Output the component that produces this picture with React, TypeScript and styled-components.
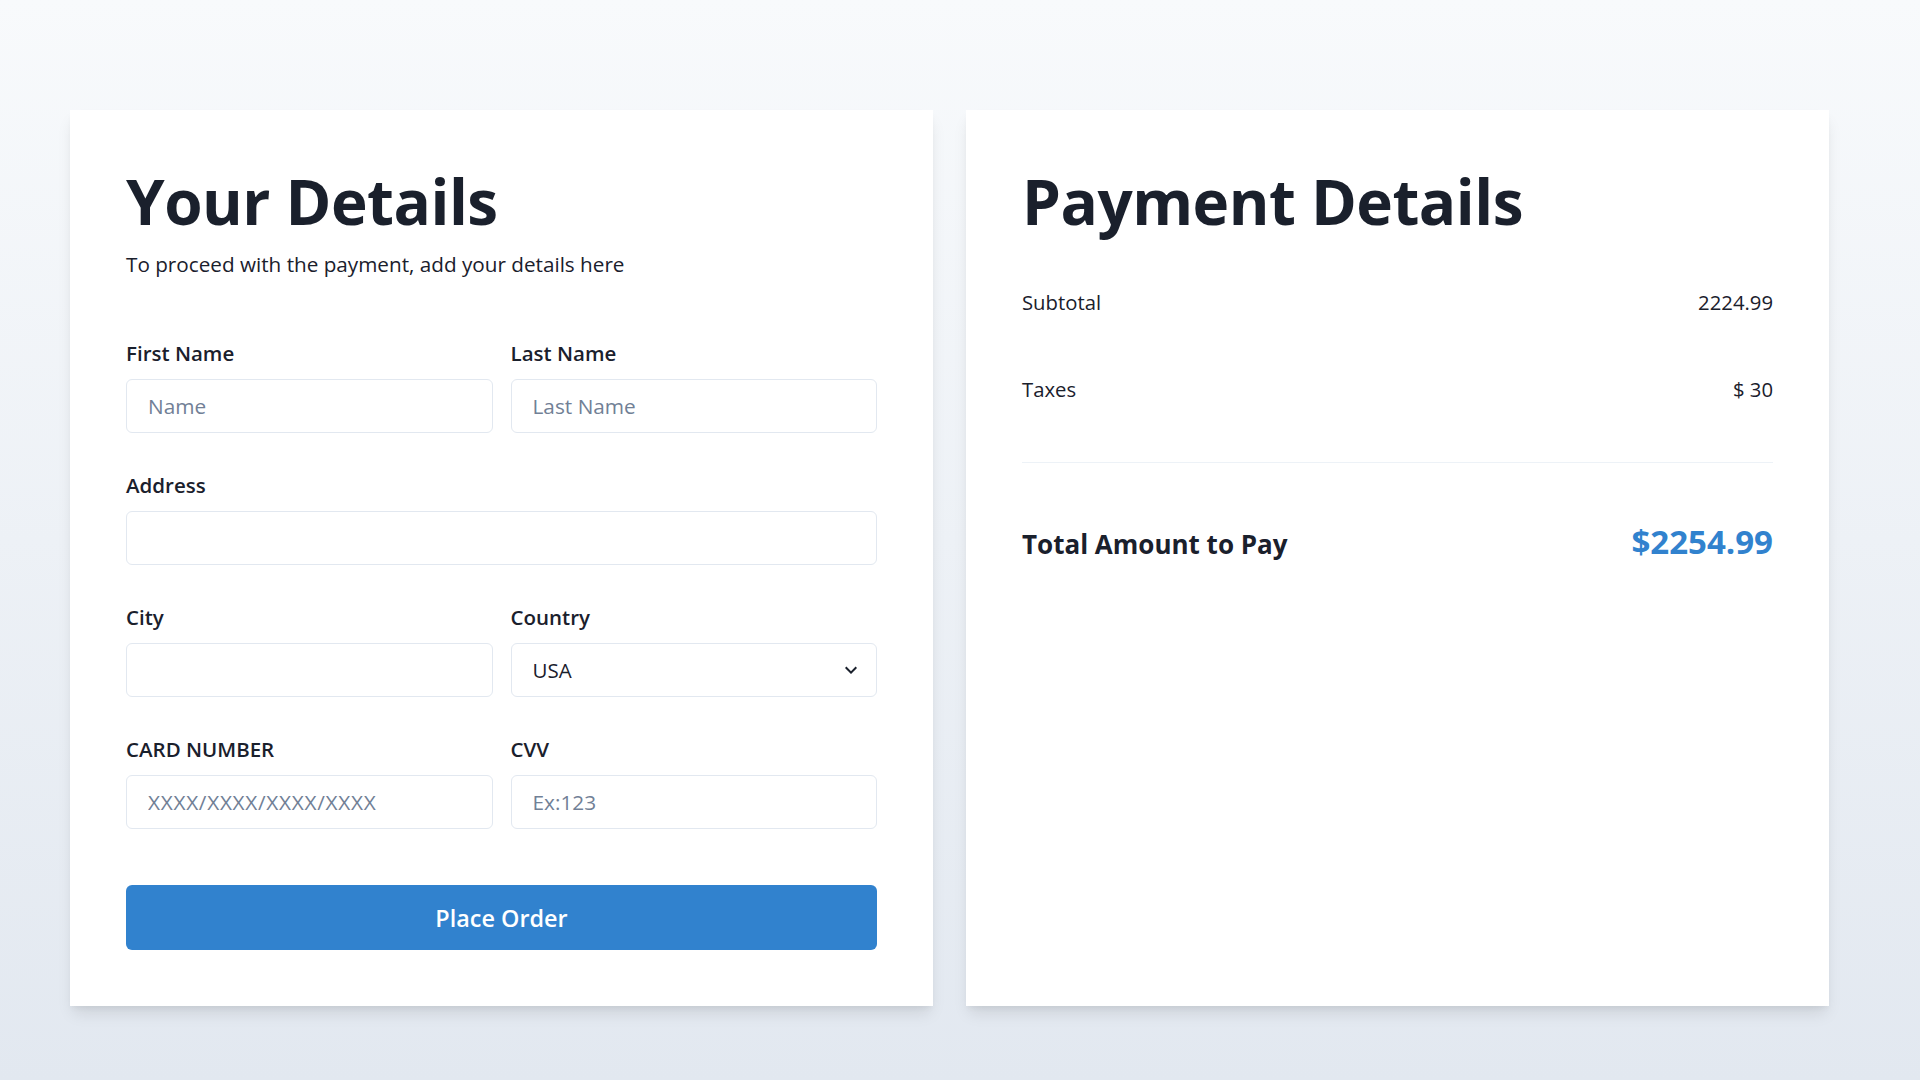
import React from "react";
import styled, { createGlobalStyle } from "styled-components";

const GlobalStyle = createGlobalStyle`
  body {
    margin: 0;
    font-family: "Open Sans", "Noto Sans", Arial, sans-serif;
    color: #1a202c;
    -webkit-font-smoothing: antialiased;
  }
  * {
    box-sizing: border-box;
  }
`;

const Page = styled.div`
  height: 1080px;
  padding: 110px 0 74px 70px;
  background: linear-gradient(to bottom, #f8fafc 0%, #e2e8f0 100%);
`;

const Columns = styled.div`
  width: 1759px;
  height: 100%;
  display: flex;
  gap: 33px;
  align-items: stretch;
`;

const Card = styled.section`
  flex: 1 1 0;
  min-width: 0;
  background: #ffffff;
  padding: 56px;
  box-shadow: 0 10px 15px -3px rgba(0, 0, 0, 0.1), 0 4px 6px -2px rgba(0, 0, 0, 0.05);
  display: flex;
  flex-direction: column;
`;

const Title = styled.h2`
  margin: 0;
  font-size: 62px;
  font-weight: 700;
  line-height: 70px;
  color: #1a202c;
  letter-spacing: -0.5px;
`;

const Subtitle = styled.p`
  margin: 13px 0 0;
  font-size: 20.7px;
  line-height: 30px;
  color: #1a202c;
`;

const FormGrid = styled.div`
  margin-top: 61px;
  display: grid;
  grid-template-columns: 1fr 1fr;
  column-gap: 18px;
  row-gap: 39px;
`;

const Field = styled.div<{ $full?: boolean }>`
  display: flex;
  flex-direction: column;
  grid-column: ${(p) => (p.$full ? "1 / -1" : "auto")};
`;

const Label = styled.label`
  font-size: 20.5px;
  line-height: 27px;
  font-weight: 600;
  margin-bottom: 12px;
  color: #1a202c;
`;

const Input = styled.input<{ $wide?: boolean }>`
  height: 54px;
  width: 100%;
  border: 1px solid #e2e8f0;
  border-radius: 6px;
  padding: 0 21px;
  font-family: inherit;
  font-size: 20.8px;
  color: #1a202c;
  background: #ffffff;
  outline: none;
  letter-spacing: ${(p) => (p.$wide ? "0.7px" : "normal")};
  &::placeholder {
    color: #718096;
  }
`;

const SelectWrap = styled.div`
  position: relative;
  width: 100%;
`;

const Select = styled.select`
  appearance: none;
  -webkit-appearance: none;
  height: 54px;
  width: 100%;
  border: 1px solid #e2e8f0;
  border-radius: 6px;
  padding: 0 48px 0 21px;
  font-family: inherit;
  font-size: 20.5px;
  color: #1a202c;
  background: #ffffff;
  outline: none;
`;

const SelectIcon = styled.svg`
  position: absolute;
  right: 14px;
  top: 50%;
  transform: translateY(-50%);
  width: 24px;
  height: 24px;
  pointer-events: none;
  color: #1a202c;
`;

const Button = styled.button`
  margin-top: 56px;
  height: 65px;
  width: 100%;
  border: none;
  border-radius: 6px;
  background: #3182ce;
  color: #ffffff;
  font-family: inherit;
  font-size: 23.4px;
  font-weight: 600;
  cursor: pointer;
`;

const Rows = styled.div`
  margin-top: 51px;
  display: flex;
  flex-direction: column;
  gap: 57px;
`;

const Row = styled.div`
  display: flex;
  justify-content: space-between;
  align-items: baseline;
  font-size: 20.3px;
  line-height: 30px;
`;

const Divider = styled.hr`
  margin: 58px 0 0;
  border: none;
  border-top: 1px solid #edf2f7;
`;

const TotalRow = styled.div`
  margin-top: 61px;
  display: flex;
  justify-content: space-between;
  align-items: baseline;
`;

const TotalLabel = styled.span`
  font-size: 26px;
  font-weight: 700;
  line-height: 36px;
`;

const TotalAmount = styled.span`
  font-size: 33px;
  font-weight: 700;
  line-height: 36px;
  color: #3182ce;
`;

export default function App() {
  return (
    <>
      <GlobalStyle />
      <Page>
        <Columns>
          <Card>
            <Title>Your Details</Title>
            <Subtitle>To proceed with the payment, add your details here</Subtitle>
            <FormGrid>
              <Field>
                <Label htmlFor="first">First Name</Label>
                <Input id="first" placeholder="Name" />
              </Field>
              <Field>
                <Label htmlFor="last">Last Name</Label>
                <Input id="last" placeholder="Last Name" />
              </Field>
              <Field $full>
                <Label htmlFor="address">Address</Label>
                <Input id="address" />
              </Field>
              <Field>
                <Label htmlFor="city">City</Label>
                <Input id="city" />
              </Field>
              <Field>
                <Label htmlFor="country">Country</Label>
                <SelectWrap>
                  <Select id="country" defaultValue="USA">
                    <option value="USA">USA</option>
                    <option value="Canada">Canada</option>
                    <option value="Mexico">Mexico</option>
                  </Select>
                  <SelectIcon viewBox="0 0 24 24" aria-hidden="true">
                    <path fill="currentColor" d="M16.59 8.59L12 13.17 7.41 8.59 6 10l6 6 6-6z" />
                  </SelectIcon>
                </SelectWrap>
              </Field>
              <Field>
                <Label htmlFor="card">CARD NUMBER</Label>
                <Input id="card" $wide placeholder="XXXX/XXXX/XXXX/XXXX" />
              </Field>
              <Field>
                <Label htmlFor="cvv">CVV</Label>
                <Input id="cvv" placeholder="Ex:123" />
              </Field>
            </FormGrid>
            <Button type="button">Place Order</Button>
          </Card>
          <Card>
            <Title>Payment Details</Title>
            <Rows>
              <Row>
                <span>Subtotal</span>
                <span>2224.99</span>
              </Row>
              <Row>
                <span>Taxes</span>
                <span>$ 30</span>
              </Row>
            </Rows>
            <Divider />
            <TotalRow>
              <TotalLabel>Total Amount to Pay</TotalLabel>
              <TotalAmount>$2254.99</TotalAmount>
            </TotalRow>
          </Card>
        </Columns>
      </Page>
    </>
  );
}
